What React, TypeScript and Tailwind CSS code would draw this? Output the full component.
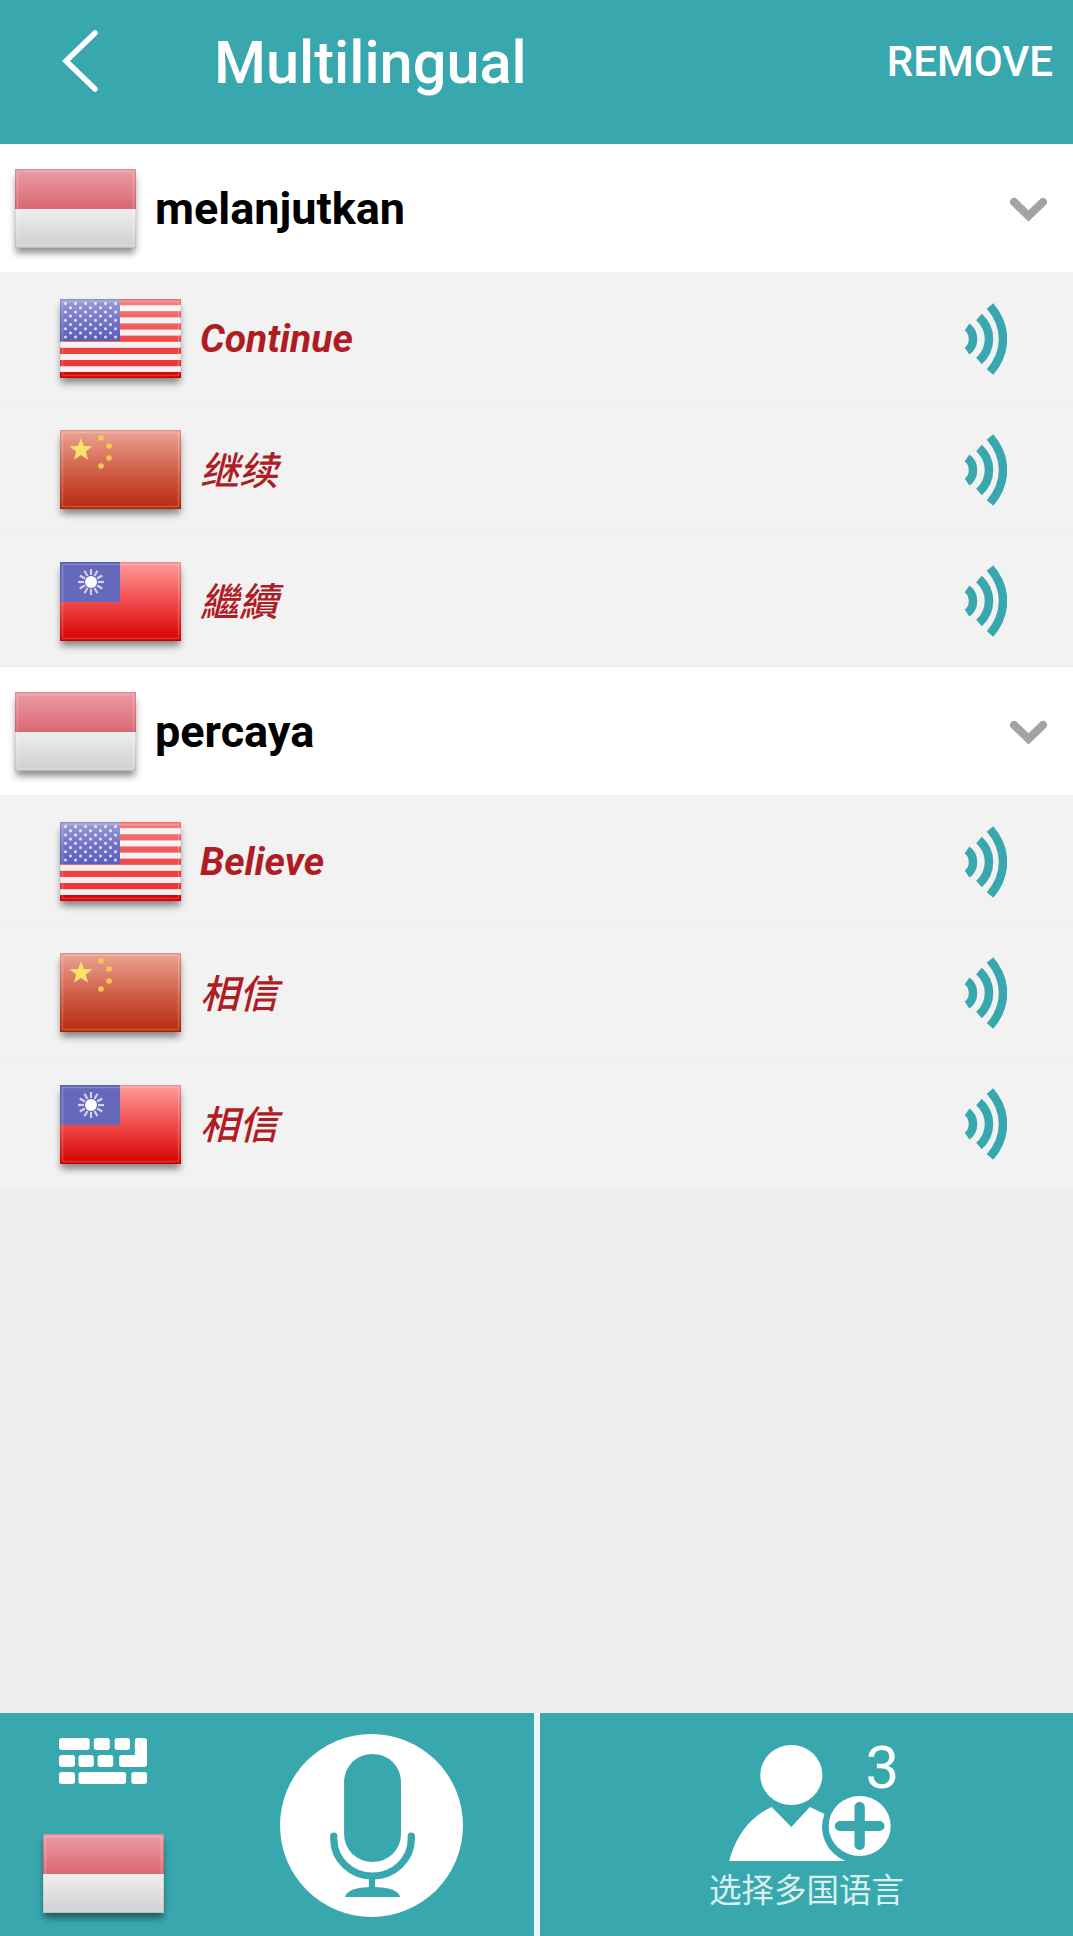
import React, { useId } from "react";

type Kind = "id" | "us" | "cn" | "tw";

function Star({ cx, cy, r, fill }: { cx: number; cy: number; r: number; fill: string }) {
  const pts = Array.from({ length: 10 }, (_, i) => {
    const a = -Math.PI / 2 + (i * Math.PI) / 5;
    const q = i % 2 ? r * 0.42 : r;
    return `${cx + q * Math.cos(a)},${cy + q * Math.sin(a)}`;
  }).join(" ");
  return <polygon points={pts} fill={fill} />;
}

function Flag({ kind }: { kind: Kind }) {
  const uid = useId();
  const gloss = `g${uid}`;
  const W = 121;
  const H = 79;
  return (
    <svg
      width={W}
      height={H}
      viewBox={`0 0 ${W} ${H}`}
      className="shrink-0 shadow-[0_6px_7px_-1px_rgba(0,0,0,0.45)] blur-[0.5px]"
    >
      <defs>
        <linearGradient id={gloss} x1="0" y1="0" x2="0" y2="1">
          <stop offset="0" stopColor="#fff" stopOpacity="0.4" />
          <stop offset="0.5" stopColor="#fff" stopOpacity="0.15" />
          <stop offset="1" stopColor="#fff" stopOpacity="0" />
        </linearGradient>
        <linearGradient id={`${gloss}cn`} x1="0" y1="0" x2="0" y2="1">
          <stop offset="0" stopColor="#eba496" />
          <stop offset="0.5" stopColor="#d2614a" />
          <stop offset="1" stopColor="#b5290d" />
        </linearGradient>
        <linearGradient id={`${gloss}tw`} x1="0" y1="0" x2="0" y2="1">
          <stop offset="0" stopColor="#ff9c9c" />
          <stop offset="0.5" stopColor="#f04a4a" />
          <stop offset="1" stopColor="#d40000" />
        </linearGradient>
        <linearGradient id={`${gloss}idr`} x1="0" y1="0" x2="0" y2="1">
          <stop offset="0" stopColor="#ec9ca5" />
          <stop offset="1" stopColor="#d96873" />
        </linearGradient>
        <linearGradient id={`${gloss}idw`} x1="0" y1="0" x2="0" y2="1">
          <stop offset="0" stopColor="#eeeeee" />
          <stop offset="1" stopColor="#cfcfcf" />
        </linearGradient>
      </defs>

      {kind === "id" && (
        <>
          <rect width={W} height={40} fill={`url(#${gloss}idr)`} />
          <rect y={40} width={W} height={39} fill={`url(#${gloss}idw)`} />
        </>
      )}

      {kind === "us" && (
        <>
          <rect width={W} height={H} fill="#f0f0f0" />
          {Array.from({ length: 7 }, (_, i) => (
            <rect key={i} y={i * 12.2} width={W} height={6.2} fill={i === 6 ? "#d90000" : "#ee2a2a"} />
          ))}
          <rect y={73} width={W} height={6} fill="#d90000" />
          <rect width={W} height={H} fill={`url(#${gloss})`} />
          <rect width={60} height={42} fill="#5b5ebb" />
          <rect width={60} height={42} fill={`url(#${gloss})`} />
          {Array.from({ length: 9 }, (_, r) =>
            Array.from({ length: r % 2 ? 5 : 6 }, (_, c) => (
              <circle
                key={`${r}-${c}`}
                cx={(r % 2 ? 10.5 : 5.5) + c * 10}
                cy={4.5 + r * 4.2}
                r={1.5}
                fill="#fff"
                opacity={0.8}
              />
            ))
          )}
        </>
      )}

      {kind === "cn" && (
        <>
          <rect width={W} height={H} fill={`url(#${gloss}cn)`} />
          <Star cx={21} cy={20} r={12} fill="#fbe36a" />
          <circle cx={41} cy={8} r={2.8} fill="#f6c94f" />
          <circle cx={49} cy={16} r={2.8} fill="#f6c94f" />
          <circle cx={49} cy={28} r={2.8} fill="#f6c94f" />
          <circle cx={41} cy={36} r={2.8} fill="#f6c94f" />
        </>
      )}

      {kind === "tw" && (
        <>
          <rect width={W} height={H} fill={`url(#${gloss}tw)`} />
          <rect width={60} height={40} fill="#6568bb" />
          {Array.from({ length: 12 }, (_, i) => {
            const a = (i * Math.PI) / 6;
            return (
              <line
                key={i}
                x1={31 + 7 * Math.cos(a)}
                y1={20 + 7 * Math.sin(a)}
                x2={31 + 13 * Math.cos(a)}
                y2={20 + 13 * Math.sin(a)}
                stroke="#d4d4ee"
                strokeWidth={2.2}
              />
            );
          })}
          <circle cx={31} cy={20} r={6} fill="#fff" />
        </>
      )}

      <rect x={2.5} y={2.5} width={W - 5} height={H - 5} fill="none" stroke="#fff" strokeOpacity={0.2} strokeWidth={1.5} />
      <rect x={0.5} y={0.5} width={W - 1} height={H - 1} fill="none" stroke="#000" strokeOpacity={0.08} strokeWidth={1} />
    </svg>
  );
}

function Sound() {
  return (
    <svg width="46" height="72" viewBox="0 0 46 72" fill="none" stroke="#38a8ae" strokeWidth="8.5" className="shrink-0 blur-[0.4px]">
      <path d="M6 24 Q12 28 12 36 Q12 44 6 48" />
      <path d="M18 14 Q28 23 28 36 Q28 49 18 58" />
      <path d="M29 3 Q42 18 42 36 Q42 54 29 69" />
    </svg>
  );
}

function Chevron() {
  return (
    <svg width="37" height="25" viewBox="0 0 37 25" fill="none" stroke="#a3a3a7" strokeWidth="8" strokeLinecap="round" strokeLinejoin="miter" className="shrink-0 blur-[0.3px]">
      <path d="M4 5 L18.500 19 L33 5" />
    </svg>
  );
}

function MainRow({ text }: { text: string }) {
  return (
    <div className="flex h-[128px] items-center bg-white pl-[15px] pr-[26px]">
      <Flag kind="id" />
      <span className="ml-[19px] mt-[2px] text-[45px] font-bold text-black">{text}</span>
      <span className="ml-auto mt-[2px]">
        <Chevron />
      </span>
    </div>
  );
}

function SubRow({ kind, text, last, latin }: { kind: Kind; text: string; last?: boolean; latin?: boolean }) {
  return (
    <div className={`flex h-[131px] items-center bg-[#f2f2f2] pl-[60px] pr-[66px] pt-[3px] ${last ? "" : "border-b border-[#efefef]"}`}>
      <Flag kind={kind} />
      <span
        className={`ml-[19px] italic text-[#b01c24] ${latin ? "mt-[2px] text-[39px] font-bold" : "mb-[3px] text-[39px] font-medium"}`}
        style={latin ? undefined : { fontFamily: kind === "tw" ? "'Noto Sans CJK TC', sans-serif" : "'Noto Sans CJK SC', sans-serif" }}
      >
        {text}
      </span>
      <span className="ml-auto">
        <Sound />
      </span>
    </div>
  );
}

function Keyboard() {
  const keys: [number, number, number, number][] = [
    [0, 0, 88, 35],
    [100, 0, 46, 35],
    [160, 0, 44, 35],
    [0, 50, 46, 35],
    [56, 50, 44, 35],
    [111, 50, 45, 35],
    [0, 100, 46, 35],
    [56, 100, 137, 35],
    [208, 100, 45, 35],
  ];
  return (
    <svg width="88" height="46" viewBox="0 0 253 135" preserveAspectRatio="none" fill="#fff" className="mr-[2px] shrink-0">
      {keys.map(([x, y, w, h], i) => (
        <rect key={i} x={x} y={y} width={w} height={h} rx={8} />
      ))}
      <path d="M226 0 H245 Q253 0 253 8 V77 Q253 85 245 85 H181 Q173 85 173 77 V58 Q173 50 181 50 H218 V8 Q218 0 226 0 Z" />
    </svg>
  );
}

function Mic() {
  return (
    <div className="flex h-[183px] w-[183px] items-center justify-center rounded-full bg-white">
      <svg width="183" height="183" viewBox="0 0 177 183" preserveAspectRatio="none" fill="none">
        <rect x="62" y="20" width="55" height="108" rx="27.5" fill="#38a8ae" />
        <path d="M52 102 V105 A37.500 37 0 0 0 127 105 V102" stroke="#38a8ae" strokeWidth="7" strokeLinecap="round" />
        <rect x="86" y="142" width="6" height="14" fill="#38a8ae" />
        <path d="M63 163 Q65 153 89.500 153 Q114 153 116 163 Z" fill="#38a8ae" />
      </svg>
    </div>
  );
}

function Person() {
  return (
    <svg width="176" height="125" viewBox="0 0 170 125" preserveAspectRatio="none" fill="none" className="shrink-0">
      <circle cx="66" cy="35" r="30" fill="#fff" />
      <path d="M6 121 Q16 82 47 67 L66 87 L84 67 L98 74 A37 37 0 0 0 118 121 Z" fill="#fff" />
      <circle cx="132" cy="86" r="30" fill="#fff" />
      <path d="M113 86 H151 M132 67 V105" stroke="#38a8ae" strokeWidth="10" strokeLinecap="round" />
    </svg>
  );
}

export default function App() {
  return (
    <div
      className="flex h-[1936px] w-full flex-col overflow-hidden bg-[#eeeeee]"
      style={{ fontFamily: "Roboto, 'Noto Sans CJK SC', sans-serif" }}
    >
      <header className="flex h-[144px] items-start bg-[#38a8ae] text-white">
        <svg width="36" height="62" viewBox="0 0 36 62" fill="none" stroke="#fff" strokeWidth="5.5" strokeLinecap="round" className="ml-[62px] mt-[30px] shrink-0">
          <path d="M33 3 L4 31 L33 59" />
        </svg>
        <h1 className="ml-[116px] mt-[27px] text-[59.5px] font-medium leading-[72px]">Multilingual</h1>
        <button className="ml-auto mr-[20px] mt-[37px] text-[42px] font-medium leading-[50px]">REMOVE</button>
      </header>

      <section>
        <MainRow text="melanjutkan" />
        <SubRow kind="us" text="Continue" latin />
        <SubRow kind="cn" text="继续" />
        <SubRow kind="tw" text="繼續" last />
      </section>
      <section className="mt-[2px]">
        <MainRow text="percaya" />
        <SubRow kind="us" text="Believe" latin />
        <SubRow kind="cn" text="相信" />
        <SubRow kind="tw" text="相信" last />
      </section>

      <div className="flex-1" />

      <footer className="flex h-[223px] bg-[#e9f6f6]">
        <div className="flex w-[534px] bg-[#38a8ae]">
          <div className="ml-[43px] flex w-[121px] flex-col items-center pt-[25px]">
            <Keyboard />
            <div className="mt-[50px]">
              <Flag kind="id" />
            </div>
          </div>
          <div className="ml-[116px] pt-[21px]">
            <Mic />
          </div>
        </div>
        <div className="ml-[6px] flex flex-1 flex-col items-center bg-[#38a8ae] pt-[27px]">
          <div className="relative ml-[8px]">
            <Person />
            <span className="absolute left-[143px] top-[-7px] text-[60px] font-normal leading-[70px] text-white">3</span>
          </div>
          <div className="mt-[3px] text-[32.5px] leading-[40px] text-[#d8f0f0]" style={{ fontFamily: "'Noto Sans CJK SC', sans-serif", fontWeight: 400 }}>
            选择多国语言
          </div>
        </div>
      </footer>
    </div>
  );
}
